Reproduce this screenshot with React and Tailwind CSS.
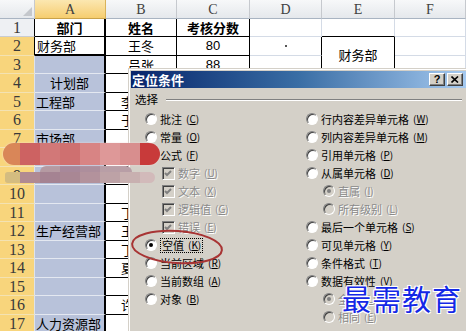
import React from "react";

const A = ["部门", "财务部", "", "计划部", "工程部", "", "市场部", "", "", "", "", "生产经营部", "", "", "", "", "人力资源部"];
const B = ["姓名", "王冬", "吕张", "", "李小刚", "于海洋", "", "", "", "", "丁建华", "王晓东", "丁国强", "夏文博", "", "许文杰", ""];
const C = ["考核分数", "80", "88", "75", "90", "86", "79", "92", "85", "88", "76", "81", "93", "87", "80", "84", "90"];

function Radio({ checked, disabled }) {
  return (
    <span
      className={
        "relative inline-block w-[12px] h-[12px] shrink-0 rounded-full border border-t-[#808080] border-l-[#808080] border-b-white border-r-white shadow-[inset_1px_1px_0_#404040] " +
        (disabled ? "bg-[#d4d0c8]" : "bg-white")
      }
    >
      {checked ? (
        <span
          className={
            "absolute left-[3px] top-[3px] w-[4px] h-[4px] rounded-full " +
            (disabled ? "bg-[#808080]" : "bg-black")
          }
        />
      ) : null}
    </span>
  );
}

function Check() {
  return (
    <span className="relative inline-block w-[13px] h-[13px] shrink-0 border border-t-[#808080] border-l-[#808080] border-b-white border-r-white shadow-[inset_1px_1px_0_#404040] bg-[#d4d0c8]">
      <svg width="11" height="11" viewBox="0 0 11 11" className="absolute left-0 top-0">
        <polyline points="2,5 4,7 8,3" fill="none" stroke="#808080" strokeWidth="2" />
      </svg>
    </span>
  );
}

function Label({ t, k, disabled, focus }) {
  return (
    <span
      className={
        "flex items-center leading-none whitespace-nowrap " +
        (disabled ? "text-[#8a8a8a] [text-shadow:1px_1px_0_#ffffff] " : "text-black ") +
        (focus ? "border border-dotted border-black px-[1px] py-[1px]" : "")
      }
    >
      <span>{t}</span>
      <span className="ml-[4px] text-[10px]">
        (<span className="underline">{k}</span>)
      </span>
    </span>
  );
}

function Opt({ kind, t, k, checked, disabled, indent, focus }) {
  return (
    <div className={"h-[18px] flex items-center gap-[3px] " + (indent ? "pl-[17px]" : "")}>
      {kind === "chk" ? <Check /> : <Radio checked={checked} disabled={disabled} />}
      <Label t={t} k={k} disabled={disabled} focus={focus} />
    </div>
  );
}

function Dialog() {
  return (
    <div className="absolute left-[128px] top-[68px] w-[340px] h-[270px] border-l border-t border-[#d4d0c8] bg-[#d4d0c8]">
      <div className="h-full border-l border-t border-white p-[1px] flex flex-col font-['Noto_Sans_CJK_SC',sans-serif]">
        <div className="h-[17px] flex items-center justify-between bg-gradient-to-r from-[#0a246a] via-[#3a6ea5] to-[#a6caf0] pl-[1px] pr-[4px]">
          <span className="text-white font-bold text-[13px] leading-none">定位条件</span>
          <div className="flex gap-[2px]">
            <div className="w-[16px] h-[13px] bg-[#d4d0c8] border border-t-white border-l-white border-b-[#404040] border-r-[#404040] shadow-[inset_-1px_-1px_0_#808080] flex items-center justify-center text-[11px] font-bold leading-none font-['Liberation_Sans',sans-serif]">
              ?
            </div>
            <div className="w-[16px] h-[13px] bg-[#d4d0c8] border border-t-white border-l-white border-b-[#404040] border-r-[#404040] shadow-[inset_-1px_-1px_0_#808080] flex items-center justify-center">
              <svg width="8" height="7" viewBox="0 0 8 7">
                <path d="M0.5 0.5 L7 6.5 M7 0.5 L0.5 6.5" stroke="#000" strokeWidth="1.6" />
              </svg>
            </div>
          </div>
        </div>
        <div className="pl-[4px] pr-[5px] pt-[5px] flex items-center gap-[8px] h-[19px]">
          <span className="text-[11.5px] leading-none">选择</span>
          <div className="flex-1 h-[2px] border-t border-[#808080] border-b border-b-white" />
        </div>
        <div className="mt-[3px] pl-[14px] grid grid-cols-[161px_1fr] text-[11px]">
          <div className="flex flex-col">
            <Opt t="批注" k="C" />
            <Opt t="常量" k="O" />
            <Opt t="公式" k="F" />
            <Opt kind="chk" indent t="数字" k="U" disabled />
            <Opt kind="chk" indent t="文本" k="X" disabled />
            <Opt kind="chk" indent t="逻辑值" k="G" disabled />
            <Opt kind="chk" indent t="错误" k="E" disabled />
            <Opt t="空值" k="K" checked focus />
            <Opt t="当前区域" k="R" />
            <Opt t="当前数组" k="A" />
            <Opt t="对象" k="B" />
          </div>
          <div className="flex flex-col">
            <Opt t="行内容差异单元格" k="W" />
            <Opt t="列内容差异单元格" k="M" />
            <Opt t="引用单元格" k="P" />
            <Opt t="从属单元格" k="D" />
            <Opt indent t="直属" k="I" checked disabled />
            <Opt indent t="所有级别" k="L" disabled />
            <Opt t="最后一个单元格" k="S" />
            <Opt t="可见单元格" k="Y" />
            <Opt t="条件格式" k="T" />
            <Opt t="数据有效性" k="V" />
            <Opt indent t="全部" k="L" checked disabled />
            <Opt indent t="相同" k="E" disabled />
          </div>
        </div>
      </div>
    </div>
  );
}

function Sheet() {
  const cells = [];
  const hdr =
    "flex items-center justify-center border-r border-b border-r-[#c6c9ce] border-b-[#a9b4c2] bg-gradient-to-b from-[#f7f8f9] to-[#e5e8ec] text-[14px] text-[#404040] font-['Liberation_Serif',serif]";
  cells.push(
    <div key="corner" className="flex items-end justify-end p-[2px] border-r border-b border-r-[#c6c9ce] border-b-[#a9b4c2] bg-gradient-to-b from-[#f7f8f9] to-[#e5e8ec]">
      <svg width="9" height="9" viewBox="0 0 9 9">
        <polygon points="9,0 9,9 0,9" fill="#c4c7cc" />
      </svg>
    </div>
  );
  cells.push(
    <div key="hA" className="flex items-center justify-center border-r border-b border-r-[#d9b35a] border-b-[#c9a24a] bg-gradient-to-b from-[#fbe7b0] to-[#f6cd6e] text-[14px] text-[#404040] font-['Liberation_Serif',serif]">
      A
    </div>
  );
  ["B", "C", "D", "E", "F"].forEach((l) =>
    cells.push(
      <div key={"h" + l} className={hdr}>
        {l}
      </div>
    )
  );

  for (let r = 1; r <= 17; r++) {
    const i = r - 1;
    const rh =
      r === 1
        ? "bg-[#eef0f3] border-b-[#c9ccd1] border-r-black"
        : r === 2
        ? "bg-[#f8d57c] border-b-[#f3e2b2] border-r-black"
        : "bg-[#f8d57c] border-b-[#f3e2b2] border-r-[#dfe3ea]";
    cells.push(
      <div
        key={"r" + r}
        className={
          "flex items-center justify-center border-r border-b text-[16px] leading-none text-[#3a3a3a] font-['Liberation_Serif',serif] " +
          rh
        }
      >
        {r}
      </div>
    );
    let ac;
    if (r === 1) ac = "bg-white border-b border-b-black justify-center font-bold";
    else if (r === 2) ac = "bg-white border-b-2 border-b-black justify-start pl-[2px]";
    else ac = "bg-[#b8c2da] border-b border-b-[#e4e8f1] " + (r === 4 ? "justify-center" : "justify-start pl-[1px]");
    cells.push(
      <div key={"a" + r} className={"flex items-center overflow-hidden whitespace-nowrap border-r-2 border-r-black text-[13px] " + ac}>
        {A[i]}
      </div>
    );
    cells.push(
      <div
        key={"b" + r}
        className={
          "flex items-center overflow-hidden whitespace-nowrap bg-white border-r border-b border-black text-[13px] " +
          (r === 1 ? "font-bold justify-center" : r <= 3 ? "justify-center" : "justify-start pl-[15px]")
        }
      >
        {B[i]}
      </div>
    );
    cells.push(
      <div
        key={"c" + r}
        className={
          "flex items-center justify-center overflow-hidden whitespace-nowrap bg-white border-r border-b border-black text-[13px] " +
          (r === 1 ? "font-bold" : "font-['Liberation_Sans',sans-serif]")
        }
      >
        {C[i]}
      </div>
    );
    cells.push(
      <div
        key={"d" + r}
        className={
          "flex items-start justify-center bg-white border-r border-b border-b-[#d4dbe6] " +
          (r === 2 || r === 3 ? "border-r-black" : "border-r-[#d4dbe6]")
        }
      >
        {r === 2 ? <span className="mt-[8px] w-[2px] h-[2px] bg-[#555]" /> : null}
      </div>
    );
    if (r === 2) {
      cells.push(
        <div key="e2" className="row-span-2 flex items-center justify-center bg-white border-r border-b border-black text-[13px]">
          财务部
        </div>
      );
    } else if (r !== 3) {
      cells.push(
        <div
          key={"e" + r}
          className={"bg-white border-r border-b border-r-[#d4dbe6] " + (r === 1 ? "border-b-black" : "border-b-[#d4dbe6]")}
        />
      );
    }
    cells.push(<div key={"f" + r} className="bg-white border-r border-b border-[#d4dbe6]" />);
  }

  return (
    <div className="grid grid-cols-[35px_71px_71px_73px_72px_73px_71px] grid-rows-[19px_18px_19px_18px_19px_18px_19px_18px_19px_18px_19px_18px_19px_18px_19px_18px_19px_18px] font-['Noto_Sans_CJK_SC',sans-serif] text-black">
      {cells}
    </div>
  );
}

function Smears() {
  const c1 = ["#d98658", "#cd6262", "#d27878", "#cf7070", "#d88484", "#de9898", "#d88e8e", "#c83a3a"];
  const w1 = [17, 20, 20, 20, 20, 20, 20, 20];
  const c2 = ["#d4bc80", "#b08a92", "#a58392", "#a98794", "#b3929c", "#bda2a6", "#c8b0b0", "#d2baba"];
  const w2 = [15, 20, 20, 20, 20, 20, 20, 15];
  return (
    <>
      <div className="absolute left-[40px] top-[166px] w-[92px] h-[10px] rounded-t-[6px] overflow-hidden flex">
        <div className="w-[20px] bg-[#b59aa2]" />
        <div className="w-[20px] bg-[#a8889a]" />
        <div className="w-[20px] bg-[#ad8e9c]" />
        <div className="w-[32px] bg-[#b89ea6]" />
      </div>
      <div className="absolute left-[5px] top-[172px] w-[150px] h-[11px] rounded-r-[6px] rounded-l-[3px] overflow-hidden flex">
        {c2.map((c, i) => (
          <div key={i} style={{ width: w2[i], background: c }} />
        ))}
      </div>
      <div className="absolute left-[3px] top-[143px] w-[157px] h-[22px] rounded-[11px] overflow-hidden flex shadow-[0_0_2px_#f4dcdc]">
        {c1.map((c, i) => (
          <div key={i} style={{ width: w1[i], background: c }} />
        ))}
      </div>
    </>
  );
}

export default function App() {
  return (
    <div className="relative w-[466px] h-[331px] overflow-hidden bg-white">
      <Sheet />
      <Dialog />
      <Smears />
      <svg className="absolute left-[126px] top-[226px]" width="102" height="42" viewBox="0 0 102 42">
        <ellipse cx="51" cy="21" rx="45" ry="16" fill="none" stroke="#a83434" strokeWidth="2" transform="rotate(4 51 21)" />
      </svg>
      <div className="absolute left-[342px] top-[284px] text-[29px] leading-none text-[#1428e6] font-['Noto_Sans_CJK_SC',sans-serif] [text-shadow:-1px_-1px_0_#fff,1px_-1px_0_#fff,-1px_1px_0_#fff,1px_1px_0_#fff,0_0_2px_#fff] tracking-[1px]">
        最需教育
      </div>
    </div>
  );
}
